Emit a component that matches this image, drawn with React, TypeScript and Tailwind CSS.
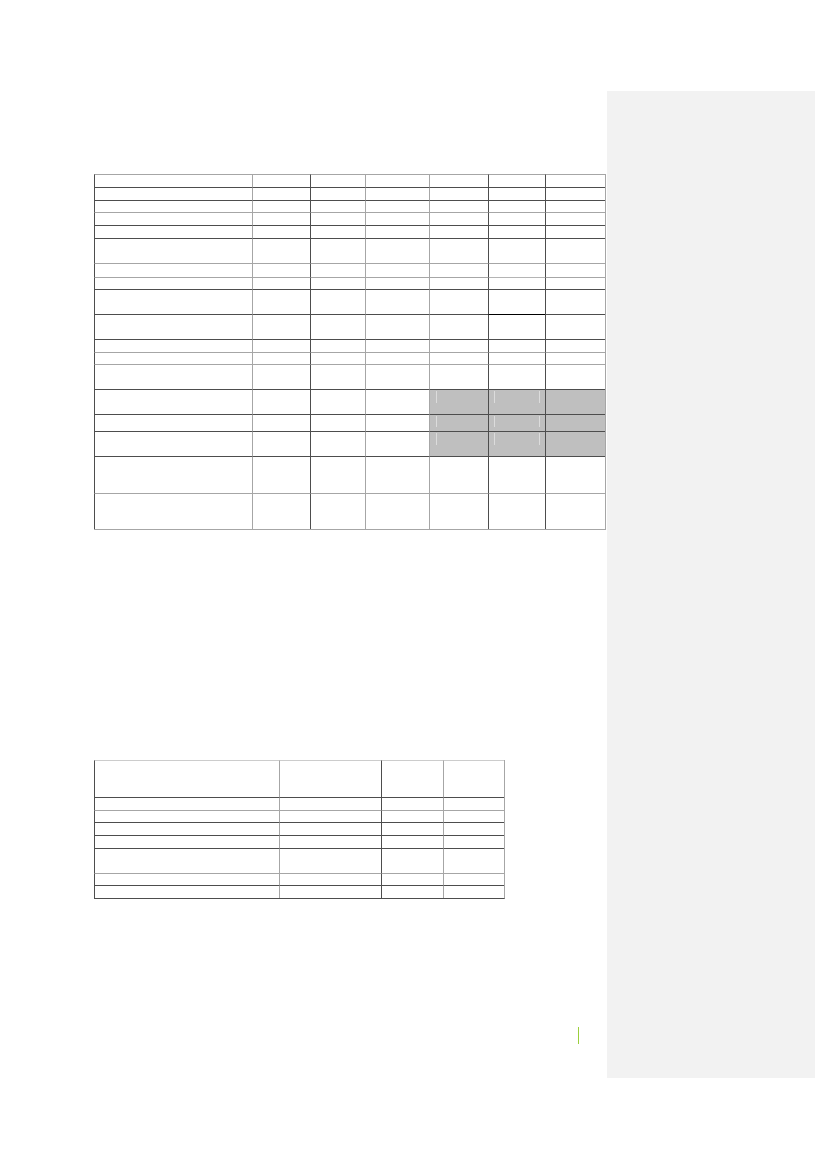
const DARK = 'border-[#4d4d4d]';

// top-border colour per row, left-border colour per column
const topCls: Record<string, string> = {
  d: 'border-t-[#4d4d4d]',
  l: 'border-t-[#a6a6a6]',
  v: 'border-t-[#cccccc]',
  k: 'border-t-[#000000]',
  x: 'border-t-[#b4b4b4]',
};
const leftCls: Record<string, string> = {
  d: 'border-l-[#4d4d4d]',
  l: 'border-l-[#a6a6a6]',
};

type Row = { h: number; top: string; shade?: number[]; over?: Record<number, string> };

const mainCols = [
  { w: 158, c: 'd' },
  { w: 58, c: 'l' },
  { w: 55, c: 'd' },
  { w: 64, c: 'l' },
  { w: 59, c: 'l' },
  { w: 57, c: 'd' },
  { w: 60, c: 'd' },
];

const mainRows: Row[] = [
  { h: 13, top: 'l' },
  { h: 13, top: 'd' },
  { h: 12, top: 'd' },
  { h: 13, top: 'l' },
  { h: 13, top: 'd' },
  { h: 25, top: 'd' },
  { h: 14, top: 'l' },
  { h: 12, top: 'l', over: { 5: 'x' } },
  { h: 25, top: 'd' },
  { h: 25, top: 'd', over: { 5: 'k' } },
  { h: 13, top: 'd' },
  { h: 12, top: 'l' },
  { h: 25, top: 'l' },
  { h: 25, top: 'd', shade: [4, 5, 6] },
  { h: 17, top: 'd', shade: [4, 5, 6] },
  { h: 25, top: 'd', shade: [4, 5, 6] },
  { h: 37, top: 'd' },
  { h: 36, top: 'l' },
];

const smallCols = [
  { w: 185, c: 'd' },
  { w: 102, c: 'l' },
  { w: 62, c: 'd' },
  { w: 61, c: 'l' },
];

const smallRows: Row[] = [
  { h: 37, top: 'v' },
  { h: 13, top: 'd' },
  { h: 12, top: 'l' },
  { h: 13, top: 'd' },
  { h: 13, top: 'd' },
  { h: 25, top: 'd' },
  { h: 12, top: 'l' },
  { h: 13, top: 'd' },
];

// faint marks visible inside the shaded cells
const Marks = ({ col, h }: { col: number; h: number }) => {
  const len = h > 20 ? 'h-[12px]' : 'h-[11px]';
  if (col === 4)
    return (
      <div className="flex h-full pl-[6px] pt-[1px]">
        <div className={`w-px ${len} bg-[#dcdcdc]`} />
      </div>
    );
  if (col === 5)
    return (
      <div className="flex h-full justify-between px-[5px] pt-[1px]">
        <div className={`w-px ${len} bg-[#dcdcdc]`} />
        <div className={`w-px ${len} bg-[#dcdcdc]`} />
      </div>
    );
  return null;
};

const Grid = ({
  cols,
  rows,
  bottom,
  right,
}: {
  cols: { w: number; c: string }[];
  rows: Row[];
  bottom: string;
  right: string;
}) => (
  <div className={`flex w-fit flex-col border-b border-r ${bottom} ${right}`}>
    {rows.map((r, ri) => (
      <div key={ri} className="flex" style={{ height: r.h }}>
        {cols.map((c, ci) => {
          const shaded = r.shade?.includes(ci);
          const t = r.over?.[ci] ?? r.top;
          return (
            <div
              key={ci}
              className={`border-l border-t ${topCls[t]} ${leftCls[c.c]} ${shaded ? 'bg-[#bfbfbf]' : 'bg-white'}`}
              style={{ width: c.w }}
            >
              {shaded && <Marks col={ci} h={r.h} />}
            </div>
          );
        })}
      </div>
    ))}
  </div>
);

export default function App() {
  return (
    <div className="flex min-h-[1169px] w-[826px] bg-white">
      <div className="flex w-[607px] shrink-0 flex-col pl-[94px] pt-[174px]">
        <Grid cols={mainCols} rows={mainRows} bottom="border-b-[#a6a6a6]" right="border-r-[#a6a6a6]" />

        <div className="mt-[230px]">
          <Grid cols={smallCols} rows={smallRows} bottom={`border-b-[#4d4d4d] ${DARK}`} right="border-r-[#a6a6a6]" />
        </div>

        <div className="ml-[484px] mt-[128px] h-[17px] w-px bg-[#9bcf3c]" />
      </div>

      <aside className="mt-[91px] h-[987px] w-[208px] bg-[#f2f2f2]" />
    </div>
  );
}
